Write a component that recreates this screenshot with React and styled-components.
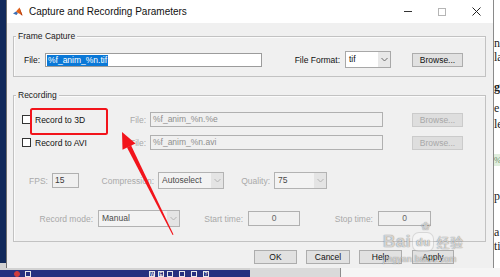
import React from 'react'
import styled, { createGlobalStyle } from 'styled-components'

const Global = createGlobalStyle`
  html, body { margin: 0; padding: 0; }
  body {
    width: 500px;
    height: 277px;
    overflow: hidden;
    background: #fff;
    font-family: "Liberation Sans", Arial, sans-serif;
  }
`;

function MatlabIcon() {
    return (
        <svg width="10" height="10" viewBox="0 0 10 10">
            <path d="M0 6.5 L3 4.5 L5 6 L3.5 8 Z" fill="#3b6fb6" />
            <path d="M3 4.5 L6.5 0.5 L9.5 8.5 L7 7 L5 6 Z" fill="#e2631c" />
            <path d="M6.5 0.5 L9.5 8.5 L8 8 Z" fill="#b33b0e" />
        </svg>
    )
}

function Chevron({ color }) {
    return (
        <svg width="7" height="5" viewBox="0 0 7 5">
            <path d="M0.5 1 L3.5 4 L6.5 1" fill="none" stroke={color} strokeWidth="1" />
        </svg>
    )
}

function Select({ w, ml, value, disabled }) {
    return (
        <SelectBox $w={w} $ml={ml} $disabled={disabled}>
            <SelectValue $disabled={disabled}>{value}</SelectValue>
            <SelectArrow $disabled={disabled}>
                <Chevron color={disabled ? '#b4b4b4' : '#6a6a6a'} />
            </SelectArrow>
        </SelectBox>
    )
}

function App() {
    return (
        <Screen>
            <Global />
            <Main>
                <LeftStrip />
                <Dialog>
                    <TitleBar>
                        <MatlabIcon />
                        <Title>Capture and Recording Parameters</Title>
                        <WinButton>
                            <MinGlyph />
                        </WinButton>
                        <WinButton>
                            <MaxGlyph />
                        </WinButton>
                        <WinButton>
                            <svg width="9" height="9" viewBox="0 0 9 9">
                                <path d="M0.5 0.5 L8.5 8.5 M8.5 0.5 L0.5 8.5" stroke="#222" strokeWidth="1" />
                            </svg>
                        </WinButton>
                    </TitleBar>

                    <Body>
                        <Group $h={41} $mt={0} $pt={14}>
                            <Legend>Frame Capture</Legend>
                            <Row>
                                <Label $w={26}>File:</Label>
                                <Field $w={217} $h={14} $ml={5} $bg="#fff" $border="#9c9c9c">
                                    <Selected>%f_anim_%n.tif</Selected>
                                </Field>
                                <Label $w={78}>File Format:</Label>
                                <Select w={46} ml={5} value="tif" />
                                <Button $w={51} $ml={21}>Browse...</Button>
                            </Row>
                        </Group>

                        <Group $h={147} $mt={18} $pt={16}>
                            <Legend>Recording</Legend>
                            <Row>
                                <CheckCell>
                                    <CheckBox />
                                    <CheckLabel>Record to 3D</CheckLabel>
                                </CheckCell>
                                <Label $w={20} $disabled>File:</Label>
                                <Field $w={233} $h={15} $ml={4} $disabled>%f_anim_%n.%e</Field>
                                <Button $w={51} $ml={29} $disabled>Browse...</Button>
                            </Row>
                            <Row $mt={8}>
                                <CheckCell>
                                    <CheckBox />
                                    <CheckLabel>Record to AVI</CheckLabel>
                                </CheckCell>
                                <Label $w={20} $disabled>File:</Label>
                                <Field $w={233} $h={15} $ml={4} $disabled>%f_anim_%n.avi</Field>
                                <Button $w={51} $ml={29} $disabled>Browse...</Button>
                            </Row>
                            <Row $mt={22}>
                                <Label $w={34} $disabled>FPS:</Label>
                                <Field $w={27} $h={15} $ml={4} $disabled $ink="#3c3c3c">15</Field>
                                <Label $w={75} $disabled>Compression:</Label>
                                <Select w={66} ml={4} value="Autoselect" disabled />
                                <Label $w={46} $disabled>Quality:</Label>
                                <Select w={53} ml={4} value="75" disabled />
                            </Row>
                            <Row $mt={21}>
                                <Label $w={79} $disabled>Record mode:</Label>
                                <Select w={82} ml={5} value="Manual" disabled />
                                <Label $w={63} $disabled>Start time:</Label>
                                <Field $w={52} $h={15} $ml={5} $disabled $center $ink="#666">0</Field>
                                <Label $w={73} $disabled>Stop time:</Label>
                                <Field $w={53} $h={15} $ml={5} $disabled $center $ink="#666">0</Field>
                            </Row>
                        </Group>

                        <ButtonRow>
                            <Button $w={43}>OK</Button>
                            <Button $w={44} $ml={9}>Cancel</Button>
                            <Button $w={43} $ml={9}>Help</Button>
                            <Button $w={42} $ml={10}>Apply</Button>
                        </ButtonRow>
                    </Body>
                </Dialog>
                <DocStrip>
                    <DocLine $mt={36}>nl</DocLine>
                    <DocLine>la</DocLine>
                    <DocLine $mt={16} $bold>g</DocLine>
                    <DocLine $mt={7}>e</DocLine>
                    <DocLine $mt={2}>le</DocLine>
                    <DocCode $mt={23}>%</DocCode>
                    <DocLine $mt={23}>pa</DocLine>
                    <DocLine $mt={22}>a</DocLine>
                    <DocLine>ti</DocLine>
                </DocStrip>
            </Main>
            <Taskbar>
                <NavyBar>
                    <TrayIcon $c="#d23b3b" $round />
                    <TrayIcon $c="#e8e8e8" $ml={5} />
                    <TrayGap />
                    <TrayIcon $c="#e8e8e8">W</TrayIcon>
                    <TrayIcon $c="#e8e8e8" $ml={3}>E</TrayIcon>
                    <TrayIcon $c="#e8e8e8" $ml={3} />
                    <TrayIcon $c="#e8e8e8" $ml={6} />
                    <TrayIcon $c="#e8e8e8" $ml={6} />
                    <TrayIcon $c="#e8e8e8" $ml={6}>?</TrayIcon>
                </NavyBar>
                <GrayBar />
                <LightRest />
            </Taskbar>

            <Watermark>
                <Paw>❀</Paw>
                <MarkWord>
                    Bai<MarkDu>du</MarkDu><MarkCn>经验</MarkCn>
                </MarkWord>
                <MarkUrl>jingyan.baidu.com</MarkUrl>
            </Watermark>

            <Annotation width="500" height="277" viewBox="0 0 500 277">
                <rect x="31" y="109" width="76" height="25" rx="1.5" fill="none" stroke="#f2141b" strokeWidth="2" />
                <polygon points="122,132 135.5,143.5 122.5,149.8" fill="#f2141b" />
                <polygon points="131,145.3 127,147.4 172.6,235 173.5,234.6" fill="#f2141b" />
            </Annotation>
        </Screen>
    )
}

export default App;

const Screen = styled.div`
    position: relative;
    width: 500px;
    height: 277px;
    display: flex;
    flex-direction: column;
    overflow: hidden;
`;

const Main = styled.div`
    display: flex;
    height: 268px;
`;

const LeftStrip = styled.div`
    width: 6px;
    background: linear-gradient(#11295b 0 263px, #d2d2d2 263px);
`;

const Dialog = styled.div`
    width: 488px;
    box-sizing: border-box;
    border-left: 1px solid #6f6f6f;
    border-right: 1px solid #8a8a8a;
    background: #f0f0f0;
    display: flex;
    flex-direction: column;
`;

const TitleBar = styled.div`
    height: 23px;
    background: #fff;
    display: flex;
    align-items: center;
    padding-left: 6px;
`;

const Title = styled.div`
    flex: 1;
    margin-left: 6px;
    font-size: 10px;
    color: #111;
    white-space: nowrap;
`;

const WinButton = styled.div`
    width: 34px;
    height: 23px;
    display: flex;
    align-items: center;
    justify-content: center;
`;

const MinGlyph = styled.div`
    width: 8px;
    height: 1px;
    background: #333;
`;

const MaxGlyph = styled.div`
    width: 6px;
    height: 6px;
    border: 1px solid #b5b5b5;
`;

const Body = styled.div`
    display: flex;
    flex-direction: column;
    padding: 13px 7px 0 6px;
`;

const Group = styled.div`
    position: relative;
    box-sizing: border-box;
    height: ${p => p.$h}px;
    margin-top: ${p => p.$mt}px;
    padding-top: ${p => p.$pt}px;
    border: 1px solid #c2c2c2;
    box-shadow: inset 1px 1px 0 #fbfbfb;
    display: flex;
    flex-direction: column;
`;

const Legend = styled.div`
    position: absolute;
    top: -6px;
    left: 2px;
    padding: 0 2px;
    background: #f0f0f0;
    font-size: 8.5px;
    line-height: 10px;
    color: #1a1a1a;
`;

const Row = styled.div`
    display: flex;
    align-items: center;
    margin-top: ${p => p.$mt || 0}px;
`;

const Label = styled.div`
    flex-shrink: 0;
    width: ${p => p.$w}px;
    text-align: right;
    font-size: 8.5px;
    line-height: 12px;
    white-space: nowrap;
    color: ${p => (p.$disabled ? '#a9a9a9' : '#111')};
`;

const Field = styled.div`
    flex-shrink: 0;
    box-sizing: border-box;
    width: ${p => p.$w}px;
    height: ${p => p.$h}px;
    margin-left: ${p => p.$ml || 0}px;
    padding: 0 2px;
    border: 1px solid ${p => p.$border || (p.$disabled ? '#b0b0b0' : '#9c9c9c')};
    background: ${p => p.$bg || '#f0f0f0'};
    font-size: 8.5px;
    line-height: ${p => p.$h - 2}px;
    white-space: nowrap;
    overflow: hidden;
    text-align: ${p => (p.$center ? 'center' : 'left')};
    color: ${p => p.$ink || (p.$disabled ? '#8f8f8f' : '#111')};
`;

const Selected = styled.span`
    display: inline-block;
    background: #0a78d7;
    color: #fff;
    line-height: 11px;
    padding: 0 1px;
    margin-left: -1px;
`;

const SelectBox = styled.div`
    flex-shrink: 0;
    box-sizing: border-box;
    width: ${p => p.$w}px;
    height: 17px;
    margin-left: ${p => p.$ml}px;
    border: 1px solid ${p => (p.$disabled ? '#b3b3b3' : '#a8a8a8')};
    background: ${p => (p.$disabled ? '#f3f3f3' : '#fff')};
    display: flex;
`;

const SelectValue = styled.div`
    flex: 1;
    padding-left: 3px;
    font-size: 8.5px;
    line-height: 15px;
    color: ${p => (p.$disabled ? '#4a4a4a' : '#111')};
    white-space: nowrap;
    overflow: hidden;
`;

const SelectArrow = styled.div`
    width: 12px;
    display: flex;
    align-items: center;
    justify-content: center;
    background: ${p => (p.$disabled ? '#e4e4e4' : '#e8e8e8')};
`;

const Button = styled.div`
    flex-shrink: 0;
    box-sizing: border-box;
    width: ${p => p.$w}px;
    height: 14px;
    margin-left: ${p => p.$ml || 0}px;
    border: 1px solid ${p => (p.$disabled ? '#cbcbcb' : '#adadad')};
    background: ${p => (p.$disabled ? '#dedede' : '#e1e1e1')};
    font-size: 8.5px;
    line-height: 12px;
    text-align: center;
    color: ${p => (p.$disabled ? '#a8a8a8' : '#111')};
`;

const CheckCell = styled.div`
    width: 112px;
    flex-shrink: 0;
    display: flex;
    align-items: center;
    padding-left: 8px;
    box-sizing: border-box;
`;

const CheckBox = styled.div`
    width: 9px;
    height: 9px;
    box-sizing: border-box;
    border: 1px solid #333;
    background: #fff;
`;

const CheckLabel = styled.div`
    margin-left: 4px;
    font-size: 8.5px;
    line-height: 12px;
    color: #111;
    white-space: nowrap;
`;

const ButtonRow = styled.div`
    display: flex;
    justify-content: flex-end;
    margin-top: 8px;
    padding-right: 32px;
`;

const DocStrip = styled.div`
    width: 6px;
    background: #fff;
    overflow: hidden;
    display: flex;
    flex-direction: column;
    font-family: "Liberation Serif", "Times New Roman", serif;
    font-size: 12px;
    color: #222;
`;

const DocLine = styled.div`
    margin-top: ${p => p.$mt || 0}px;
    line-height: 14px;
    white-space: nowrap;
    font-weight: ${p => (p.$bold ? 700 : 400)};
`;

const DocCode = styled.div`
    margin-top: ${p => p.$mt}px;
    height: 12px;
    line-height: 12px;
    font-size: 9px;
    color: #6a8a6a;
    background: #dfeedd;
    white-space: nowrap;
`;

const Taskbar = styled.div`
    display: flex;
    height: 9px;
`;

const NavyBar = styled.div`
    width: 250px;
    background: linear-gradient(#d2d2d2 0 2px, #27307f 2px);
    display: flex;
    align-items: flex-end;
    padding-left: 14px;
    box-sizing: border-box;
`;

const TrayIcon = styled.div`
    width: 6px;
    height: 6px;
    margin-left: ${p => p.$ml || 0}px;
    box-sizing: border-box;
    border: 1px solid ${p => p.$c};
    border-radius: ${p => (p.$round ? '50%' : '0')};
    background: ${p => (p.$round ? p.$c : 'transparent')};
    font-size: 5px;
    line-height: 4px;
    color: #fff;
    text-align: center;
`;

const TrayGap = styled.div`
    width: 118px;
`;

const GrayBar = styled.div`
    width: 90px;
    background: #dadada;
    border-right: 1px solid #8c8c8c;
`;

const LightRest = styled.div`
    flex: 1;
    background: #f5f5f5;
`;

const Watermark = styled.div`
    position: absolute;
    left: 383px;
    top: 221px;
    width: 92px;
    display: flex;
    flex-direction: column;
    align-items: flex-start;
    pointer-events: none;
    color: rgba(255, 255, 255, 0.7);
    text-shadow:
        0 0 1px rgba(0, 0, 0, 0.35),
        0 0 1px rgba(0, 0, 0, 0.35);
`;

const Paw = styled.div`
    margin-left: 38px;
    font-size: 11px;
    line-height: 11px;
`;

const MarkWord = styled.div`
    display: flex;
    align-items: center;
    font-size: 17px;
    font-weight: 700;
    line-height: 18px;
    letter-spacing: 0.5px;
`;

const MarkDu = styled.span`
    margin-left: 1px;
    font-size: 11px;
    padding: 0 3px;
    border-radius: 7px;
    border: 1px solid rgba(0, 0, 0, 0.12);
    background: rgba(255, 255, 255, 0.35);
`;

const MarkCn = styled.span`
    margin-left: 2px;
    font-size: 13px;
    font-family: "Noto Sans CJK SC", sans-serif;
    font-weight: 400;
`;

const MarkUrl = styled.div`
    margin-top: 3px;
    font-size: 8.5px;
    line-height: 9px;
    letter-spacing: 0.3px;
`;

const Annotation = styled.svg`
    position: absolute;
    left: 0;
    top: 0;
    pointer-events: none;
`;
